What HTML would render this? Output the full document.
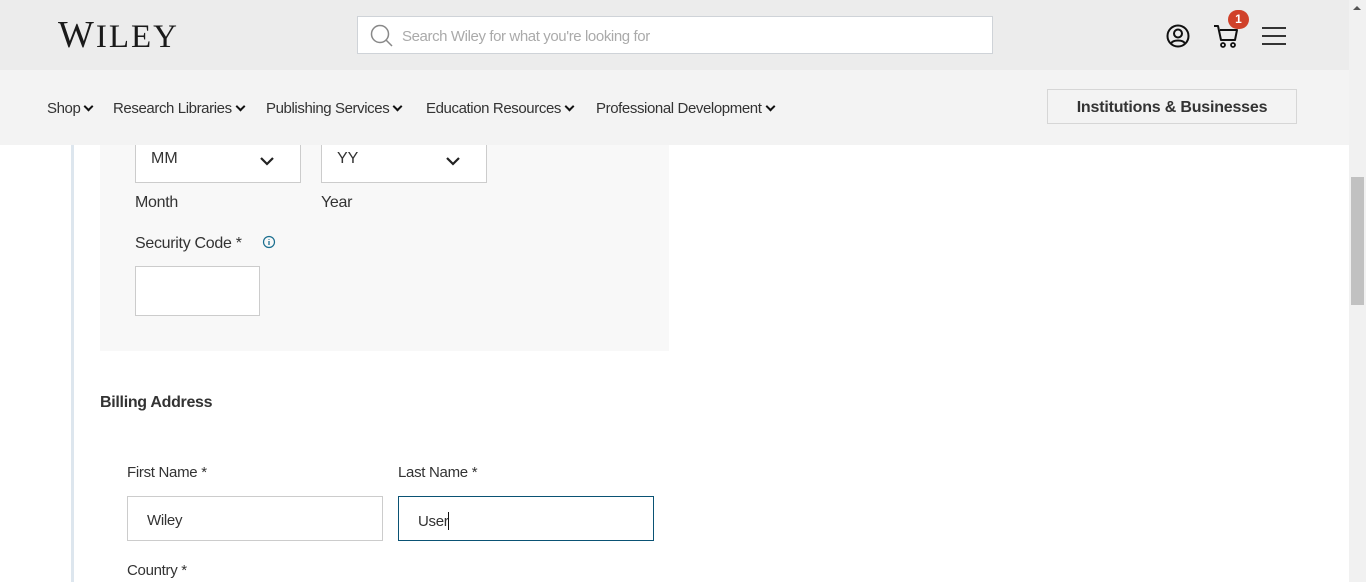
<!DOCTYPE html>
<html><head><meta charset="utf-8"><style>
*{box-sizing:border-box;margin:0;padding:0}
body{width:1366px;height:582px;overflow:hidden;background:#fff;font-family:"Liberation Sans",sans-serif;color:#333;position:relative}
.a{position:absolute}
.hdr{left:0;top:0;width:1349px;height:70px;background:#ececec}
.nav{left:0;top:70px;width:1349px;height:75px;background:#f3f3f3}
.sb{left:1349px;top:0;width:17px;height:582px;background:#f1f1f1}
.thumb{left:1351px;top:177px;width:13px;height:128px;background:#c1c1c1}
.navi{top:100px;font-size:15px;color:#333;letter-spacing:-0.4px;white-space:nowrap}
.chev{display:inline-block;width:7px;height:7px;border-right:2px solid #111;border-bottom:2px solid #111;transform:rotate(45deg);margin-left:5px;position:relative;top:-3px}
.box{background:#fff;border:1px solid #ccc}
.lbl{font-size:16px;color:#333;letter-spacing:-0.3px}
</style></head><body>
<div class="a hdr"></div>
<div class="a" style="left:58px;top:15px;font-family:'Liberation Serif',serif;font-size:38px;letter-spacing:2px;color:#1a1a1a;line-height:40px">W<span style="font-size:33px">ILEY</span></div>
<div class="a" style="left:357px;top:16px;width:636px;height:38px;background:#fff;border:1px solid #cfd3d8"></div>
<svg class="a" style="left:369px;top:23px" width="26" height="26" viewBox="0 0 26 26"><circle cx="11" cy="11" r="8.5" fill="none" stroke="#888" stroke-width="1.5"/><path d="M17 17l6 6" stroke="#888" stroke-width="1.5"/></svg>
<div class="a" style="left:402px;top:28px;font-size:15px;color:#aaa;letter-spacing:-0.4px">Search Wiley for what you're looking for</div>
<svg class="a" style="left:1165px;top:23px" width="26" height="26" viewBox="0 0 26 26"><circle cx="13" cy="13" r="10.5" fill="none" stroke="#111" stroke-width="2"/><circle cx="13" cy="10.5" r="4" fill="none" stroke="#111" stroke-width="2"/><path d="M6 20.5c2-4 12-4 14 0" fill="none" stroke="#111" stroke-width="2"/></svg>
<svg class="a" style="left:1212px;top:22px" width="30" height="28" viewBox="0 0 30 28"><path d="M2 4h4l3 14h14l2-10H8" fill="none" stroke="#111" stroke-width="2" stroke-linejoin="round"/><circle cx="11" cy="23" r="2" fill="none" stroke="#111" stroke-width="1.8"/><circle cx="21" cy="23" r="2" fill="none" stroke="#111" stroke-width="1.8"/></svg>
<div class="a" style="left:1228px;top:10px;width:21px;height:19px;border-radius:10px;background:#d0412a;color:#fff;font-size:12px;font-weight:bold;text-align:center;line-height:19px">1</div>
<div class="a" style="left:1262px;top:27px;width:24px;height:2px;background:#333"></div>
<div class="a" style="left:1262px;top:35px;width:24px;height:2px;background:#333"></div>
<div class="a" style="left:1262px;top:43px;width:24px;height:2px;background:#333"></div>
<div class="a nav"></div>
<div class="a navi" style="left:47px">Shop<span class="chev"></span></div>
<div class="a navi" style="left:113px">Research Libraries<span class="chev"></span></div>
<div class="a navi" style="left:266px">Publishing Services<span class="chev"></span></div>
<div class="a navi" style="left:426px">Education Resources<span class="chev"></span></div>
<div class="a navi" style="left:596px">Professional Development<span class="chev"></span></div>
<div class="a" style="left:1047px;top:89px;width:250px;height:35px;border:1px solid #d6d6d6;font-size:16px;font-weight:bold;color:#333;text-align:center;line-height:35px;letter-spacing:-0.2px">Institutions &amp; Businesses</div>
<div class="a sb"></div><div class="a thumb"></div>
<div class="a" style="left:1353px;top:6px;width:0;height:0;border-left:4px solid transparent;border-right:4px solid transparent;border-bottom:4px solid #555"></div>
<div class="a" style="left:71px;top:145px;width:3px;height:437px;background:#dde6ee"></div>
<div class="a" style="left:100px;top:145px;width:569px;height:206px;background:#f8f8f8"></div>
<div class="a box" style="left:135px;top:140px;width:166px;height:43px"></div>
<div class="a" style="left:151px;top:150px;font-size:16px">MM</div>
<svg class="a" style="left:259px;top:155px" width="16" height="12"><path d="M2 3l6 6 6-6" fill="none" stroke="#222" stroke-width="2.2"/></svg>
<div class="a box" style="left:321px;top:140px;width:166px;height:43px"></div>
<div class="a" style="left:337px;top:150px;font-size:16px">YY</div>
<svg class="a" style="left:445px;top:155px" width="16" height="12"><path d="M2 3l6 6 6-6" fill="none" stroke="#222" stroke-width="2.2"/></svg>
<div class="a" style="left:0;top:70px;width:1349px;height:75px;background:#f3f3f3"></div>
<div class="a navi" style="left:47px">Shop<span class="chev"></span></div>
<div class="a navi" style="left:113px">Research Libraries<span class="chev"></span></div>
<div class="a navi" style="left:266px">Publishing Services<span class="chev"></span></div>
<div class="a navi" style="left:426px">Education Resources<span class="chev"></span></div>
<div class="a navi" style="left:596px">Professional Development<span class="chev"></span></div>
<div class="a" style="left:1047px;top:89px;width:250px;height:35px;border:1px solid #d6d6d6;font-size:16px;font-weight:bold;color:#333;text-align:center;line-height:35px;letter-spacing:-0.2px">Institutions &amp; Businesses</div>
<div class="a lbl" style="left:135px;top:194px">Month</div>
<div class="a lbl" style="left:321px;top:194px">Year</div>
<div class="a lbl" style="left:135px;top:235px">Security Code *</div>
<svg class="a" style="left:262px;top:235px" width="14" height="14"><circle cx="7" cy="7" r="5.5" fill="none" stroke="#1a6e8f" stroke-width="1.2"/><path d="M7 6v4M7 4v.8" stroke="#1a6e8f" stroke-width="1.3"/></svg>
<div class="a box" style="left:135px;top:266px;width:125px;height:50px"></div>
<div class="a" style="left:100px;top:394px;font-size:16px;font-weight:bold;color:#333;letter-spacing:-0.3px">Billing Address</div>
<div class="a" style="left:127px;top:464px;font-size:15px;letter-spacing:-0.3px">First Name *</div>
<div class="a" style="left:398px;top:464px;font-size:15px;letter-spacing:-0.3px">Last Name *</div>
<div class="a box" style="left:127px;top:496px;width:256px;height:45px"></div>
<div class="a" style="left:147px;top:512px;font-size:15px;letter-spacing:-0.3px">Wiley</div>
<div class="a" style="left:398px;top:496px;width:256px;height:45px;border:1px solid #0a5274;background:#fff"></div>
<div class="a" style="left:418px;top:512px;font-size:15px;letter-spacing:-0.3px">User<span style="display:inline-block;width:1px;height:18px;background:#111;vertical-align:-4px"></span></div>
<div class="a" style="left:127px;top:562px;font-size:15px;letter-spacing:-0.3px">Country *</div>
</body></html>
